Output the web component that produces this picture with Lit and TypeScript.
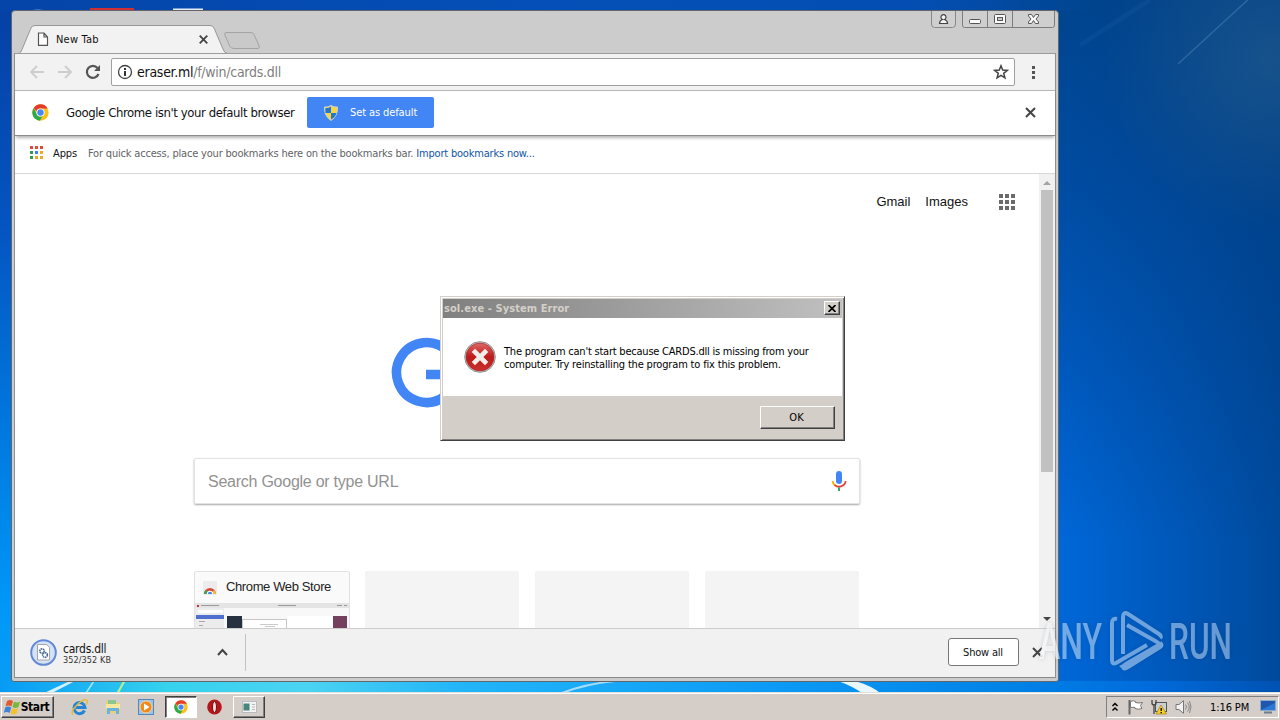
import { LitElement, html, css, svg } from "lit"
import { customElement } from "lit/decorators.js"

const chromeLogo = svg`
  <circle cx="24" cy="24" r="23" fill="#fbc116" />
  <path d="M24 1a23 23 0 0 1 20 11.500H24a11.500 11.500 0 0 0-11 8L5 11A23 23 0 0 1 24 1z" fill="#e33b2e" />
  <path d="M4.500 11.500A23 23 0 0 0 22 47l8-13a11.500 11.500 0 0 1-16-4.500z" fill="#2da94f" />
  <circle cx="24" cy="24" r="11.500" fill="#fff" />
  <circle cx="24" cy="24" r="9" fill="#4587f3" />
`

const closeIcon = html`
  <svg class="close" width="11" height="11" viewBox="0 0 11 11">
    <path d="M1 1l9 9M10 1l-9 9" stroke="#444" stroke-width="2" fill="none" />
  </svg>
`

@customElement("desktop-wallpaper")
export class DesktopWallpaper extends LitElement {
  static styles = css`
    :host {
      display: block;
      width: 1280px;
      height: 720px;
    }

    svg {
      display: block;
    }
  `

  render() {
    return html`
      <svg width="1280" height="720" viewBox="0 0 1280 720">
        <defs>
          <linearGradient id="left" x1="0" y1="0" x2="0" y2="1">
            <stop offset="0" stop-color="#0540a4" />
            <stop offset="0.3" stop-color="#0453c0" />
            <stop offset="0.6" stop-color="#0079df" />
            <stop offset="0.85" stop-color="#0098f8" />
            <stop offset="1" stop-color="#0a9df2" />
          </linearGradient>
          <linearGradient id="top" x1="0" y1="0" x2="1" y2="0">
            <stop offset="0" stop-color="#0544a8" />
            <stop offset="0.5" stop-color="#0450b8" />
            <stop offset="0.85" stop-color="#044eb2" />
            <stop offset="1" stop-color="#00458f" />
          </linearGradient>
          <linearGradient id="right" x1="0" y1="0" x2="0" y2="1">
            <stop offset="0" stop-color="#00458f" />
            <stop offset="0.25" stop-color="#004da4" />
            <stop offset="0.5" stop-color="#005ac0" />
            <stop offset="0.75" stop-color="#006ade" />
            <stop offset="1" stop-color="#006ade" />
          </linearGradient>
          <linearGradient id="edge" x1="0" y1="0" x2="1" y2="0">
            <stop offset="0" stop-color="#003c80" stop-opacity="0" />
            <stop offset="1" stop-color="#003c80" stop-opacity="0.7" />
          </linearGradient>
          <linearGradient id="floor" x1="0" y1="0" x2="1" y2="0">
            <stop offset="0" stop-color="#079bf5" />
            <stop offset="0.05" stop-color="#18aef2" />
            <stop offset="0.13" stop-color="#35d2ee" />
            <stop offset="0.24" stop-color="#4bd3f2" />
            <stop offset="0.36" stop-color="#22b5f8" />
            <stop offset="0.6" stop-color="#0c9bf5" />
            <stop offset="0.8" stop-color="#0081e6" />
            <stop offset="0.9" stop-color="#006bdb" />
            <stop offset="1" stop-color="#0052b2" />
          </linearGradient>
          <radialGradient id="haze" cx="1270" cy="60" r="170" gradientUnits="userSpaceOnUse">
            <stop offset="0" stop-color="#1c568c" stop-opacity="0.8" />
            <stop offset="1" stop-color="#1c568c" stop-opacity="0" />
          </radialGradient>
        </defs>
        <rect width="640" height="720" fill="url(#left)" />
        <rect x="640" width="640" height="720" fill="url(#right)" />
        <rect x="1040" width="240" height="720" fill="url(#edge)" />
        <rect x="1060" width="220" height="260" fill="url(#haze)" />
        <rect width="1090" height="11" fill="url(#top)" />
        <rect y="681" width="1280" height="12" fill="url(#floor)" />
        <path d="M1178 64L1252 -4" stroke="#4d82b5" stroke-width="1.500" opacity="0.5" />
        <path d="M1080 45L1150 0" stroke="#2d6db5" stroke-width="5" opacity="0.15" />
        <path d="M44 693L70 681h5L52 693z" fill="#d5f1ff" />
        <path d="M86 693l8-12M117 693l8-12" stroke="#9beaf5" stroke-width="1.500" />
        <path d="M118 693l6-12" stroke="#b4ee84" stroke-width="2" />
        <path d="M562 693Q585 684 615 681" stroke="#a8dcfb" stroke-width="2" fill="none" />
        <path d="M838 681h17Q872 686 880 693h-18Q852 686 838 681z" fill="#e9f7ff" />
        <path d="M26 11q12-3 24 0z" fill="#8ba7dc" />
        <rect x="90" y="8" width="44" height="3" fill="#cf2f35" />
        <rect x="173" y="8.500" width="30" height="3" fill="#e6edf8" />
      </svg>
    `
  }
}

@customElement("browser-window")
export class BrowserWindow extends LitElement {
  static styles = css`
    :host {
      display: flex;
      flex-direction: column;
      box-sizing: border-box;
      width: 1048px;
      height: 672px;
      background: #ccc;
      border: 1px solid #62666c;
      border-radius: 4px 4px 3px 3px;
      overflow: hidden;
      font: 11px "DejaVu Sans Condensed", "DejaVu Sans", sans-serif;
      color: #111;
    }

    * {
      box-sizing: border-box;
    }

    svg {
      display: block;
      flex: none;
    }

    .titlebar {
      display: flex;
      justify-content: space-between;
      height: 43px;
      flex: none;
    }

    .tabs {
      display: grid;
      grid-template-columns: 250px;
      padding: 14px 0 0 2px;
    }

    .tabs > * {
      grid-area: 1 / 1;
    }

    .tab-label {
      display: flex;
      align-items: center;
      height: 28px;
      padding-left: 23px;
      z-index: 1;
    }

    .tab-label span {
      margin-left: 7px;
      width: 143px;
      letter-spacing: 0.2px;
    }

    .controls {
      display: flex;
      gap: 6px;
      padding-right: 3px;
    }

    .body {
      flex: 1;
      display: flex;
      flex-direction: column;
      min-height: 0;
      margin: -1px 2px 3px;
      border: 1px solid #8f8f8f;
      background: #fff;
      border-top-color: #9c9c9c;
      border-bottom-color: #888;
    }

    .body > * {
      flex: none;
    }

    .toolbar {
      display: flex;
      align-items: center;
      height: 37px;
      background: #f2f2f2;
      border-bottom: 1px solid #b5b5b5;
      padding-left: 14px;
    }

    .nav {
      display: flex;
      gap: 12px;
      width: 82px;
    }

    .omnibox {
      display: flex;
      align-items: center;
      width: 904px;
      height: 28px;
      padding: 0 5px;
      background: #fff;
      border: 1px solid #a0a0a0;
      border-radius: 2px;
    }

    .url {
      flex: 1;
      margin-left: 4px;
      font-size: 14px;
      letter-spacing: -0.27px;
      color: #808080;
    }

    .url b {
      font-weight: normal;
      color: #111;
    }

    .kebab {
      margin-left: 16px;
    }

    .infobar {
      display: flex;
      align-items: center;
      height: 45px;
      padding: 0 19px 1px 17px;
      border-bottom: 1px solid #8c8c8c;
      box-shadow: 0 3px 3px -1px rgba(0, 0, 0, 0.3);
      font-size: 13px;
      z-index: 1;
    }

    .infobar .message {
      width: 241px;
      margin-left: 17px;
      white-space: nowrap;
      letter-spacing: -0.4px;
    }

    .default {
      display: flex;
      align-items: center;
      width: 127px;
      height: 31px;
      padding-left: 17px;
      background: #4285f4;
      border-radius: 2px;
      color: #fff;
      font-size: 11px;
      letter-spacing: -0.1px;
      margin-right: auto;
    }

    .default span {
      margin-left: 12px;
    }

    .bookmarks {
      display: flex;
      align-items: center;
      height: 38px;
      padding: 0 0 3px 15px;
      border-bottom: 1px solid #d8d8d8;
    }

    .bookmarks .apps {
      width: 35px;
      margin-left: 9px;
      letter-spacing: -0.1px;
    }

    .bookmarks .hint {
      color: #5f6368;
      letter-spacing: -0.19px;
    }

    .bookmarks a {
      color: #1155a8;
    }

    .content {
      display: flex;
      height: 454px;
      overflow: hidden;
    }

    .page {
      flex: 1;
      display: flex;
      flex-direction: column;
      align-items: center;
      font-family: "Liberation Sans", Arial, sans-serif;
    }

    .page > * {
      flex: none;
    }

    .links {
      align-self: flex-end;
      display: flex;
      align-items: center;
      gap: 15px;
      height: 55px;
      padding-right: 24px;
      font-size: 13px;
    }

    .links svg {
      margin-left: 16px;
    }

    .logo {
      height: 92px;
      width: 272px;
      margin-top: 99px;
    }

    .search {
      display: flex;
      align-items: center;
      justify-content: space-between;
      width: 666px;
      height: 46px;
      margin-top: 38px;
      padding: 2px 12px 0 13px;
      border: 1px solid #e3e3e3;
      border-radius: 2px;
      box-shadow: 0 1px 2px rgba(0, 0, 0, 0.35);
      font-size: 16px;
      letter-spacing: -0.25px;
      color: #929292;
    }

    .search svg {
      margin-bottom: 3px;
    }

    .tiles {
      display: grid;
      grid-template-columns: 156px 154px 154px 154px;
      column-gap: 16px;
      width: 666px;
      margin-top: 67px;
    }

    .tile {
      height: 130px;
      background: #f4f4f4;
      border-radius: 2px;
      margin: 0 1px 0 -1px;
    }

    .tile.store {
      background: #fafafa;
      border: 1px solid #e2e2e2;
      margin: 0;
    }

    .tile-title {
      display: flex;
      align-items: center;
      gap: 9px;
      height: 31px;
      padding-left: 8px;
      font-size: 13px;
      letter-spacing: -0.38px;
      color: #222;
    }

    .tile-title span {
      padding-bottom: 2px;
    }

    .scrollbar {
      display: flex;
      flex-direction: column;
      align-items: center;
      width: 16px;
      background: #f1f1f1;
    }

    .thumb {
      width: 12px;
      height: 282px;
      background: #c1c1c1;
      margin-bottom: auto;
    }

    .downloads {
      display: flex;
      align-items: center;
      flex: 1;
      background: #f1f1f1;
      border-top: 1px solid #ccc;
      padding: 0 0 2px 15px;
    }

    .file {
      width: 154px;
      margin-left: 6px;
      padding-top: 4px;
      font-size: 12px;
      line-height: 12px;
      letter-spacing: -0.25px;
    }

    .file small {
      display: block;
      font-size: 9px;
      line-height: 10px;
      letter-spacing: 0.1px;
      color: #333;
    }

    .divider {
      width: 1px;
      height: 37px;
      margin: 0 auto 0 17px;
      background: #c2c2c2;
    }

    .show-all {
      width: 71px;
      height: 28px;
      margin-right: 13px;
      padding: 0 1px 0 0;
      background: #fff;
      border: 1px solid #777;
      border-radius: 3px;
      font: inherit;
      letter-spacing: -0.2px;
      color: #111;
    }

    .downloads .close {
      margin-right: 12px;
    }
  `

  render() {
    return html`
      <div class="titlebar">
        <div class="tabs">
          <svg width="250" height="29" viewBox="0 0 250 29">
            <path d="M0 28.500h5q2-1 3-4L17 3q1-2.500 4-2.500h175q3 0 4 2.500l9 21q1 3.500 4 4.500v1H0z" fill="#f2f2f2" />
            <path d="M0 28.500h5q2-1 3-4L17 3q1-2.500 4-2.500h175q3 0 4 2.500l9 21q1 3.500 4 4.500" fill="none" stroke="#979797" />
            <path d="M212 7.500h25q2 0 3 2l5 11q1 3-1 3h-24q-3 0-4-2l-5-11q-1-3 1-3z" fill="#c9c9c9" stroke="#a3a3a3" />
          </svg>
          <div class="tab-label">
            <svg width="12" height="14" viewBox="0 0 12 14">
              <path d="M1.500 1h5.500l3.500 4v8.300h-9zM7 1v4h3.500" fill="#fff" stroke="#555" stroke-width="1.200" />
            </svg>
            <span>New Tab</span>
            <svg width="9" height="9" viewBox="0 0 9 9">
              <path d="M.7.700l7.600 7.600M8.300.700L.7 8.300" stroke="#444" stroke-width="1.800" />
            </svg>
          </div>
        </div>
        <div class="controls">
          <svg width="25" height="17" viewBox="0 0 25 17">
            <path d="M.5 0v13q0 3.500 3 3.500h18q3 0 3-3.500V0" fill="#cfcfcf" stroke="#888" />
            <path d="M8.500 12.500q0-3 3-4a2.500 2.500 0 1 1 2 0q3 1 3 4z" fill="#f4f4f4" stroke="#444" stroke-width="1.200" />
          </svg>
          <svg width="93" height="17" viewBox="0 0 93 17">
            <path d="M.5 0v14q0 2.500 2 2.500h88q2 0 2-2.500V0M25.500 0v16M50.500 0v16" fill="#cfcfcf" stroke="#7d7d7d" />
            <rect x="7.500" y="8.500" width="11" height="4" rx="1" fill="#fafafa" stroke="#555" />
            <rect x="32.500" y="3.500" width="11" height="9" rx="1" fill="#fafafa" stroke="#555" />
            <rect x="35.500" y="6.500" width="5" height="3" fill="#ccc" stroke="#555" />
            <path d="M66.500 3.500h3l2 3 2-3h3v1.500L74 8l2.500 3v1.500h-3l-2-3-2 3h-3V11L69 8l-2.500-3z" fill="#fafafa" stroke="#555" />
          </svg>
        </div>
      </div>
      <div class="body">
        <div class="toolbar">
          <div class="nav">
            <svg width="16" height="16" viewBox="0 0 16 16">
              <path d="M15 8H2M8 2L2 8l6 6" fill="none" stroke="#cdcdcd" stroke-width="1.800" />
            </svg>
            <svg width="16" height="16" viewBox="0 0 16 16">
              <path d="M1 8h13M8 2l6 6-6 6" fill="none" stroke="#cdcdcd" stroke-width="1.800" />
            </svg>
            <svg width="16" height="16" viewBox="0 0 16 16">
              <path d="M13.500 10a6 6 0 1 1-1-6" fill="none" stroke="#555" stroke-width="2.200" />
              <path d="M15 1v6H9z" fill="#555" />
            </svg>
          </div>
          <div class="omnibox">
            <svg width="16" height="16" viewBox="0 0 16 16">
              <circle cx="8" cy="8" r="6.500" fill="none" stroke="#444" stroke-width="1.300" />
              <path d="M8 4v2M8 7v5" stroke="#333" stroke-width="2" />
            </svg>
            <span class="url"><b>eraser.ml</b>/f/win/cards.dll</span>
            <svg width="16" height="16" viewBox="0 0 16 16">
              <path
                d="M8 1.800l1.700 4.300 4.600.300-3.600 2.900 1.200 4.500L8 11.300l-3.900 2.500 1.200-4.500L1.700 6.400l4.600-.300z"
                fill="none"
                stroke="#444"
                stroke-width="1.500"
              />
            </svg>
          </div>
          <svg class="kebab" width="5" height="14" viewBox="0 0 5 14">
            <path d="M1 1h3v3H1zM1 6h3v3H1zM1 11h3v3H1z" fill="#555" />
          </svg>
        </div>
        <div class="infobar">
          <svg width="17" height="17" viewBox="0 0 48 48">${chromeLogo}</svg>
          <span class="message">Google Chrome isn't your default browser</span>
          <div class="default">
            <svg width="14" height="16" viewBox="0 0 14 16">
              <path d="M7 .5Q10 2.500 13.500 2q.5 9-6.500 13.500Q0 11 .5 2 4 2.500 7 .5z" fill="#f7d548" stroke="#c9d5dd" />
              <path d="M7 1.500V8H1.500Q1 5 1.500 3 4.500 3.300 7 1.500zM7 8h5.500q-1 4-5.500 6.500z" fill="#2577c8" />
            </svg>
            <span>Set as default</span>
          </div>
          ${closeIcon}
        </div>
        <div class="bookmarks">
          <svg width="14" height="14" viewBox="0 0 14 14">
            <path d="M0 0h3v3H0zM5 0h3v3H5zM10 0h3v3h-3z" fill="#df4b3c" />
            <path d="M0 5h3v3H0zM0 10h3v3H0z" fill="#349a54" />
            <path d="M5 5h3v3H5z" fill="#3f7fee" />
            <path d="M10 5h3v3h-3zM5 10h3v3H5zM10 10h3v3h-3z" fill="#eaa928" />
          </svg>
          <span class="apps">Apps</span>
          <span class="hint">
            For quick access, place your bookmarks here on the bookmarks bar. <a>Import bookmarks now...</a>
          </span>
        </div>
        <div class="content">
          <div class="page">
            <div class="links">
              <span>Gmail</span>
              <span>Images</span>
              <svg width="16" height="16" viewBox="0 0 16 16">
                <path
                  d="M0 0h4v4H0zM6 0h4v4H6zM12 0h4v4h-4zM0 6h4v4H0zM6 6h4v4H6zM12 6h4v4h-4zM0 12h4v4H0zM6 12h4v4H6zM12 12h4v4h-4z"
                  fill="#6b6b6b"
                />
              </svg>
            </div>
            <svg class="logo" viewBox="0 0 272 92">
              <path d="M57 23.500A30 30 0 1 0 65.500 46.500H35" fill="none" stroke="#4285f4" stroke-width="9.500" />
            </svg>
            <div class="search">
              <span>Search Google or type URL</span>
              <svg width="16" height="22" viewBox="0 0 16 22">
                <rect x="5" y="1" width="6" height="13" rx="3" fill="#4285f4" />
                <path d="M1.500 11q.5 3 2.500 4.500" fill="none" stroke="#f4b400" stroke-width="1.800" />
                <path d="M3.500 15q4.500 3.500 9 0 2-1.500 2.200-4" fill="none" stroke="#df4436" stroke-width="1.800" />
                <path d="M8 17.500V21" stroke="#34a853" stroke-width="2" />
              </svg>
            </div>
            <div class="tiles">
              <div class="tile store">
                <div class="tile-title">
                  <svg width="14" height="14" viewBox="0 0 14 14">
                    <rect width="14" height="14" fill="#ececec" />
                    <path d="M1 13a6 6 0 0 1 12 0z" fill="#de4a3c" />
                    <path d="M1 13a6 6 0 0 1 2-4.500L6 13z" fill="#43a15a" />
                    <path d="M13 13a6 6 0 0 0-2-4L8 13z" fill="#f2c230" />
                    <path d="M3.800 13a3.200 3.200 0 0 1 6.400 0z" fill="#fff" />
                    <path d="M4.800 13a2.200 2.200 0 0 1 4.400 0z" fill="#4a86e8" />
                  </svg>
                  <span>Chrome Web Store</span>
                </div>
                <svg width="154" height="40" viewBox="0 0 154 40">
                  <rect width="154" height="40" fill="#f8f8f8" />
                  <rect width="154" height="5" fill="#e4e4e4" />
                  <path d="M2 3h2" stroke="#b33" stroke-width="2" />
                  <path d="M6 2.500h18M83 2.500h18M142 2.500h5M149 2.500h3" stroke="#999" />
                  <rect y="5" width="29" height="35" fill="#ececec" />
                  <rect x="3" y="7" width="25" height="3" fill="#fff" />
                  <rect x="1" y="12" width="28" height="4" fill="#5070cf" />
                  <path d="M4 18.500h6M4 22.500h4" stroke="#aaa" />
                  <rect x="32" y="13" width="15" height="20" fill="#26323f" />
                  <rect x="47.500" y="16.500" width="44" height="20" fill="#fff" stroke="#c8c8c8" />
                  <path d="M65 21.500h18M70 23.500h10" stroke="#ccc" />
                  <rect x="92" y="13" width="46" height="20" fill="#fff" />
                  <rect x="138" y="13" width="14" height="20" fill="#74405e" />
                </svg>
              </div>
              <div class="tile"></div>
              <div class="tile"></div>
              <div class="tile"></div>
            </div>
          </div>
          <div class="scrollbar">
            <svg width="16" height="16" viewBox="0 0 16 16"><path d="M4 11l4-4 4 4z" fill="#a3a3a3" /></svg>
            <div class="thumb"></div>
            <svg width="16" height="16" viewBox="0 0 16 16"><path d="M4 5l4 4 4-4z" fill="#444" /></svg>
          </div>
        </div>
        <div class="downloads">
          <svg width="27" height="27" viewBox="0 0 27 27">
            <circle cx="13.500" cy="13.500" r="12.300" fill="#d3e2f7" stroke="#6389d6" stroke-width="2" />
            <path d="M7.500 5.500h9l3 3v12.500h-12z" fill="#fff" stroke="#a5a5a5" />
            <circle cx="12" cy="12" r="2.200" fill="#fff" stroke="#4a6a9c" stroke-width="1.600" stroke-dasharray="1.500 0.500" />
            <circle cx="15" cy="16" r="2.400" fill="#fff" stroke="#4a6a9c" stroke-width="1.600" stroke-dasharray="1.500 0.500" />
          </svg>
          <div class="file">cards.dll<small>352/352 KB</small></div>
          <svg width="11" height="8" viewBox="0 0 11 8">
            <path d="M1 7l4.500-5L10 7" fill="none" stroke="#444" stroke-width="2" />
          </svg>
          <div class="divider"></div>
          <button class="show-all">Show all</button>
          ${closeIcon}
        </div>
      </div>
    `
  }
}

@customElement("error-dialog")
export class ErrorDialog extends LitElement {
  static styles = css`
    :host {
      display: block;
      box-sizing: border-box;
      width: 405px;
      height: 145px;
      background: #d4cec8;
      border: 1px solid;
      border-color: #d4cec8 #404040 #404040 #d4cec8;
      box-shadow: inset 1px 1px #fff, inset -1px -1px #808080;
      padding: 2px;
      font: 11px "DejaVu Sans Condensed", "DejaVu Sans", sans-serif;
      color: #000;
    }

    .title {
      display: flex;
      align-items: center;
      justify-content: space-between;
      box-sizing: border-box;
      height: 19px;
      padding: 0 2px 1px 1px;
      background: linear-gradient(90deg, #808080, #c0c0c0);
      color: #d4d0c8;
      font-weight: bold;
      letter-spacing: 0.08px;
    }

    .close,
    .ok {
      display: flex;
      align-items: center;
      justify-content: center;
      box-sizing: border-box;
      background: #d4cec8;
      border: 1px solid;
      border-color: #fff #404040 #404040 #fff;
      box-shadow: inset -1px -1px #808080;
    }

    .close {
      width: 16px;
      height: 14px;
    }

    .body {
      display: flex;
      gap: 8px;
      height: 78px;
      padding-left: 21px;
      box-sizing: border-box;
      background: #fff;
      align-items: center;
    }

    p {
      margin: 2px 0 0;
      line-height: 13px;
      letter-spacing: -0.22px;
      white-space: nowrap;
    }

    p span {
      letter-spacing: -0.17px;
    }

    .footer {
      display: flex;
      justify-content: flex-end;
      padding: 10px 7px 0;
    }

    .ok {
      width: 75px;
      height: 23px;
      padding-right: 2px;
    }
  `

  render() {
    return html`
      <div class="title">
        <span>sol.exe - System Error</span>
        <div class="close">
          <svg width="8" height="7" viewBox="0 0 8 7">
            <path d="M.5 0l7 7M7.500 0l-7 7" stroke="#000" stroke-width="1.700" />
          </svg>
        </div>
      </div>
      <div class="body">
        <svg width="32" height="32" viewBox="0 0 32 32">
          <defs>
            <linearGradient id="red" x1="0" y1="0" x2="0" y2="1">
              <stop offset="0" stop-color="#dd6a66" />
              <stop offset="0.5" stop-color="#bd1a1c" />
              <stop offset="1" stop-color="#c9302c" />
            </linearGradient>
          </defs>
          <circle cx="16" cy="16" r="15.300" fill="#ddd" stroke="#8a8a8a" />
          <circle cx="16" cy="16" r="14" fill="url(#red)" stroke="#9c2020" stroke-width="0.600" />
          <path d="M11 11l10 10M21 11L11 21" stroke="#f1eee9" stroke-width="4.600" stroke-linecap="square" />
        </svg>
        <p>
          The program can't start because CARDS.dll is missing from your<br />
          <span>computer. Try reinstalling the program to fix this problem.</span>
        </p>
      </div>
      <div class="footer"><div class="ok">OK</div></div>
    `
  }
}

@customElement("task-bar")
export class TaskBar extends LitElement {
  static styles = css`
    :host {
      display: flex;
      align-items: center;
      box-sizing: border-box;
      width: 1280px;
      height: 28px;
      padding: 2px 1px 1px 1px;
      background: #d5cec8;
      border-top: 1px solid #e2ded9;
      box-shadow: inset 0 1px #fff;
      font: 11px "DejaVu Sans Condensed", "DejaVu Sans", sans-serif;
      color: #000;
    }

    svg {
      display: block;
    }

    .button {
      display: flex;
      align-items: center;
      justify-content: center;
      box-sizing: border-box;
      height: 22px;
      border: 1px solid;
      border-color: #fff #404040 #404040 #fff;
      box-shadow: inset -1px -1px #808080;
    }

    .start {
      width: 53px;
      gap: 0;
      padding-right: 2px;
      font-weight: bold;
      font-size: 12px;
      letter-spacing: -0.4px;
    }

    .quick {
      display: flex;
      align-items: center;
      gap: 17px;
      margin: 0 11px 0 17px;
    }

    .task {
      width: 32px;
    }

    .active {
      background: #fff;
      border-color: #404040 #fff #fff #404040;
      box-shadow: inset 1px 1px #808080;
    }

    .opera {
      margin: 0 11px 0 10px;
    }

    .tray {
      display: flex;
      align-items: center;
      box-sizing: border-box;
      height: 22px;
      width: 173px;
      margin-left: auto;
      padding: 0 2px 0 4px;
      border: 1px solid;
      border-color: #808080 #fff #fff #808080;
      gap: 8px;
    }

    .clock {
      margin-left: 10px;
      margin-right: auto;
      white-space: nowrap;
      letter-spacing: -0.1px;
    }
  `

  render() {
    return html`
      <div class="button start">
        <svg width="17" height="16" viewBox="0 0 17 16">
          <path d="M3 2q3-2 6 0L7.500 7.500q-3-2-6 0z" fill="#e2592d" />
          <path d="M10 2.500q3 2 6 0L14.500 8q-3 2-6 0z" fill="#76b73c" />
          <path d="M1.200 8.500q3-2 6 0L5.700 14q-3-2-6 0z" fill="#3f83d8" />
          <path d="M8 9q3 2 6.200 0l-1.500 5.500q-3 2-6 0z" fill="#f5c02d" />
        </svg>
        Start
      </div>
      <div class="quick">
        <svg width="17" height="17" viewBox="0 0 17 17">
          <path d="M13.500 11.500A5.500 5.500 0 1 1 14 8.500H5" fill="none" stroke="#2384d6" stroke-width="3" />
          <path d="M2 15.500Q-1 13 6 6T16 1.500q1 1-1 4" fill="none" stroke="#e4bb36" stroke-width="1.500" />
        </svg>
        <svg width="16" height="16" viewBox="0 0 16 16">
          <path d="M1 2h5l1 2h8v10H1z" fill="#e8cf72" />
          <path d="M3 1h8v5H3z" fill="#8cc78f" />
          <path d="M1 5h14v5H1z" fill="#f7e8a0" />
          <path d="M2 15V9h12v6h-3v-3H5v3z" fill="#68b3df" />
        </svg>
        <svg width="16" height="16" viewBox="0 0 16 16">
          <rect x=".5" y=".5" width="15" height="15" fill="#9bc4e7" stroke="#5288bb" />
          <circle cx="8" cy="8" r="6" fill="#f08a1c" stroke="#fbd39e" />
          <path d="M6 4.500v7L11.500 8z" fill="#fff" />
        </svg>
      </div>
      <div class="button task active">
        <svg width="14" height="14" viewBox="0 0 48 48">${chromeLogo}</svg>
      </div>
      <svg class="opera" width="15" height="16" viewBox="0 0 15 16">
        <ellipse cx="7.500" cy="8" rx="7.300" ry="7.500" fill="#b3161b" />
        <ellipse cx="7.500" cy="8" rx="2" ry="5.500" fill="#f0dddd" stroke="#7c0b10" />
      </svg>
      <div class="button task">
        <svg width="15" height="12" viewBox="0 0 15 12">
          <rect x=".5" y=".5" width="14" height="11" fill="#f3f3f3" stroke="#b5bdc4" />
          <rect x="1.500" y="2.500" width="6" height="7" fill="#48857b" />
          <path d="M10 3.500h3M10 6h3M10 8.500h3" stroke="#b8b8b8" />
        </svg>
      </div>
      <div class="tray">
        <svg width="8" height="10" viewBox="0 0 8 10">
          <path d="M1.500 4L4 1.500 6.500 4M1.500 8.500L4 6l2.500 2.500" fill="none" stroke="#000" stroke-width="1.500" />
        </svg>
        <svg width="16" height="16" viewBox="0 0 16 16">
          <path d="M2.500 1v14.500" stroke="#666" stroke-width="2" />
          <path d="M3.500 2.500q3-1.500 5 0v1q3 1 7 0l-2 3 1.500 3q-4 1.500-7 0V8.500q-2-.5-4.500 0z" fill="#fff" stroke="#777" />
        </svg>
        <svg width="16" height="16" viewBox="0 0 16 16">
          <rect x="4.500" y="3.500" width="11" height="9" fill="#cad0d6" stroke="#555" />
          <path d="M1 1v3q0 2 2 2t2-2V1M3 6v9" fill="none" stroke="#444" stroke-width="1.300" />
          <path d="M5 15l5-9 5.500 9z" fill="#f7cf25" stroke="#a78312" stroke-width=".7" />
          <path d="M10.200 9v3M10.200 13v1.200" stroke="#000" stroke-width="1.300" />
        </svg>
        <svg width="17" height="14" viewBox="0 0 17 14">
          <path d="M1 4.500h3L8.500.7v12.600L4 9.500H1z" fill="#f2f2f2" stroke="#777" />
          <path d="M10.500 4.500q2 2.500 0 5M12.500 2.500q3.500 4.500 0 9M14.500 1q3 6 0 12" fill="none" stroke="#888" />
        </svg>
        <span class="clock">1:16 PM</span>
        <svg width="16" height="14" viewBox="0 0 16 14">
          <rect x=".5" y=".5" width="15" height="10" fill="#1f57ae" stroke="#89a9cd" />
          <path d="M1 10L15 3v7z" fill="#2d78d5" />
          <path d="M4 12.500h8" stroke="#6d7e91" stroke-width="2" />
        </svg>
      </div>
    `
  }
}

@customElement("any-run-mark")
export class AnyRunMark extends LitElement {
  static styles = css`
    :host {
      display: block;
    }

    svg {
      display: block;
      filter: drop-shadow(0 0 2px rgba(0, 0, 0, 0.18));
    }

    text {
      font-family: Roboto, sans-serif;
      font-size: 50px;
      font-weight: 500;
    }
  `

  render() {
    return html`
      <svg width="243" height="70" viewBox="0 0 243 70">
        <defs>
          <linearGradient id="ink" gradientUnits="userSpaceOnUse" x1="0" y1="0" x2="200" y2="0">
            <stop offset="0" stop-color="#fff" stop-opacity="0.85" />
            <stop offset="0.1" stop-color="#f0f4f8" stop-opacity="0.7" />
            <stop offset="0.12" stop-color="#b9daf9" stop-opacity="0.62" />
            <stop offset="1" stop-color="#a6c8f0" stop-opacity="0.62" />
          </linearGradient>
        </defs>
        <g fill="url(#ink)">
          <text x="2" y="52" textLength="63" lengthAdjust="spacingAndGlyphs">ANY</text>
          <text x="132" y="52" textLength="63" lengthAdjust="spacingAndGlyphs">RUN</text>
        </g>
        <path
          d="M80 12q-5-1-5 4v37q0 5 4 3l31-18M86 47V11q0-7 5-4l31 20q3 2 1 4M90 18l30 17q4 2 0 4L89 57q-4 3-5 1M86 60q1 3 5 0l32-20q3-2 0-4"
          fill="none"
          stroke="#a9cdf3"
          stroke-opacity="0.65"
          stroke-width="4"
        />
      </svg>
    `
  }
}

@customElement("app-root")
export class AppRoot extends LitElement {
  static styles = css`
    :host {
      display: block;
      position: relative;
      width: 1280px;
      height: 720px;
      overflow: hidden;
    }

    browser-window {
      position: absolute;
      left: 11px;
      top: 10px;
    }

    error-dialog {
      position: absolute;
      left: 440px;
      top: 296px;
    }

    task-bar {
      position: absolute;
      left: 0;
      bottom: 0;
    }

    any-run-mark {
      position: absolute;
      left: 1037px;
      top: 607px;
    }
  `

  render() {
    return html`
      <desktop-wallpaper></desktop-wallpaper>
      <browser-window></browser-window>
      <error-dialog></error-dialog>
      <task-bar></task-bar>
      <any-run-mark></any-run-mark>
    `
  }
}

declare global {
  interface HTMLElementTagNameMap {
    "app-root": AppRoot
  }
}
